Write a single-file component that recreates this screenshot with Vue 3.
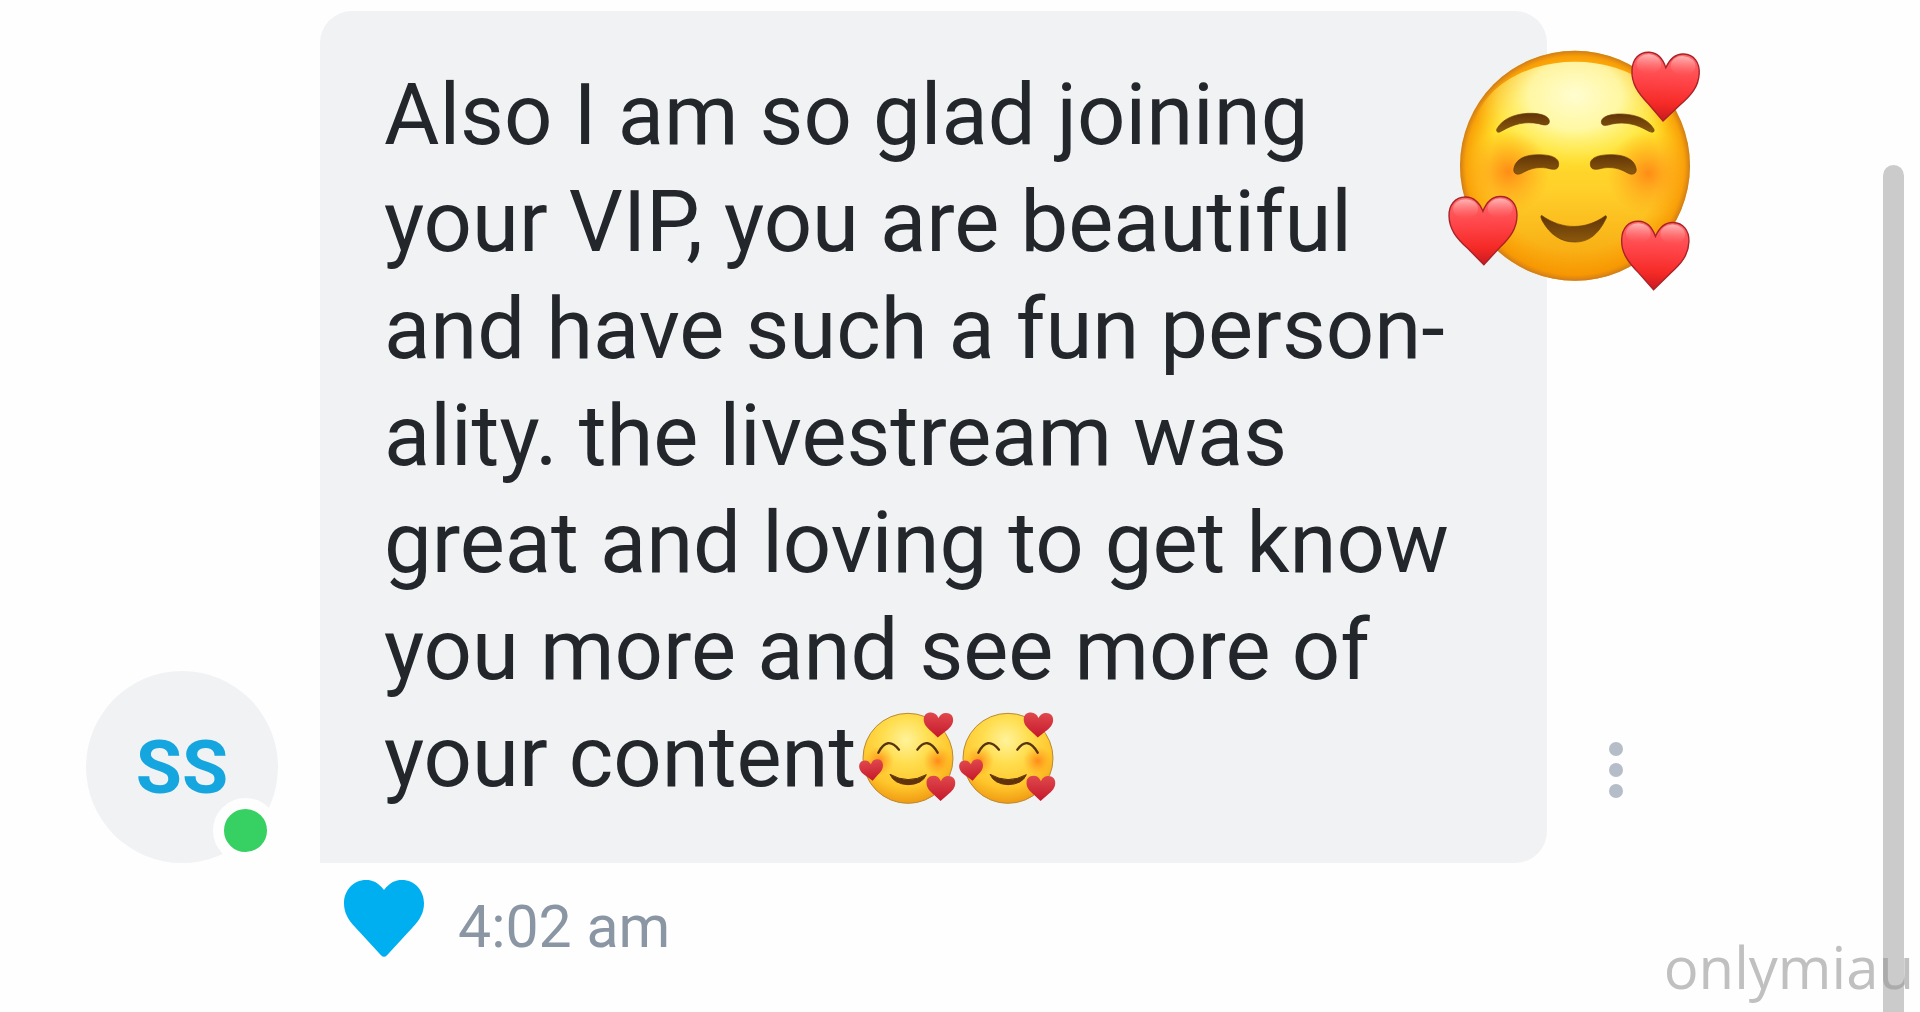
<template>
  <main class="chat">
    <div class="message">
      <div class="avatar">
        <span>SS</span>
        <i class="online"></i>
      </div>
      <div class="bubble">
        <p class="text">
          Also I am so glad joining your VIP, you are beautiful and have such a fun person&shy;ality. the livestream was
          great and loving to get know you more and see more of your content<svg
            v-for="n in 2"
            :key="n"
            class="emoji"
            viewBox="52 55 300 288"
            role="img"
            aria-label="Smiling face with hearts"
          >
            <circle cx="208" cy="200" r="135" fill="url(#smallFace)" stroke="#b98a35" stroke-width="3" />
            <circle cx="122" cy="208" r="44" fill="url(#blush)" />
            <circle cx="297" cy="208" r="44" fill="url(#blush)" />
            <g fill="none" stroke="#573410" stroke-width="7" stroke-linecap="round">
              <path d="M119 183 Q146 131 181 174" />
              <path d="M236 174 Q267 131 297 183" />
            </g>
            <path d="M154 248 Q208 279 263 249 Q251 278 208 279 Q166 277 154 248Z" fill="#60330d" stroke="#60330d" stroke-width="3" stroke-linejoin="round" />
            <g fill="url(#smallHeart)">
              <path :d="heart" transform="translate(255 61) rotate(2) scale(.9 .76)" />
              <path :d="heart" transform="translate(59 208) rotate(-6) scale(.73 .64)" />
              <path :d="heart" transform="translate(263 251) rotate(1) scale(.88 .77)" />
            </g>
          </svg>
        </p>
        <svg class="sticker" viewBox="81 54 768 735" role="img" aria-label="Smiling face with hearts">
          <defs>
            <linearGradient id="face" x1="0" y1="0" x2="0" y2="1">
              <stop offset="0" stop-color="#ffc21a" />
              <stop offset=".35" stop-color="#ffe02a" />
              <stop offset=".6" stop-color="#ffd02a" />
              <stop offset="1" stop-color="#f5a00b" />
            </linearGradient>
            <radialGradient id="edge">
              <stop offset=".74" stop-color="#ff9d00" stop-opacity="0" />
              <stop offset=".95" stop-color="#f79400" stop-opacity=".8" />
              <stop offset="1" stop-color="#cf7c1c" />
            </radialGradient>
            <radialGradient id="shine" cx=".5" cy=".22" r=".5">
              <stop offset="0" stop-color="#fffdd0" />
              <stop offset=".45" stop-color="#fffbb0" stop-opacity=".9" />
              <stop offset=".75" stop-color="#fff470" stop-opacity=".5" />
              <stop offset="1" stop-color="#ffe62b" stop-opacity="0" />
            </radialGradient>
            <radialGradient id="blush">
              <stop offset="0" stop-color="#ff7a12" stop-opacity=".8" />
              <stop offset="1" stop-color="#ff9812" stop-opacity="0" />
            </radialGradient>
            <linearGradient id="brown" x1="0" y1="0" x2="0" y2="1">
              <stop offset="0" stop-color="#613408" />
              <stop offset="1" stop-color="#8b590c" />
            </linearGradient>
            <linearGradient id="bigHeart" x1="0" y1="0" x2="0" y2="1">
              <stop offset="0" stop-color="#ff6a6c" />
              <stop offset=".4" stop-color="#ff4549" />
              <stop offset=".75" stop-color="#f52a26" />
              <stop offset="1" stop-color="#c81a20" />
            </linearGradient>
            <linearGradient id="gloss" x1="0" y1="0" x2="0" y2="1">
              <stop offset="0" stop-color="#ffc9c9" stop-opacity=".8" />
              <stop offset="1" stop-color="#ff7779" stop-opacity="0" />
            </linearGradient>
            <radialGradient id="smallFace" cx=".48" cy=".3" r=".72">
              <stop offset="0" stop-color="#fff39a" />
              <stop offset=".35" stop-color="#ffde50" />
              <stop offset=".72" stop-color="#ffc62b" />
              <stop offset="1" stop-color="#ee9510" />
            </radialGradient>
            <linearGradient id="smallHeart" x1="0" y1="0" x2="0" y2="1">
              <stop offset="0" stop-color="#e0484c" />
              <stop offset="1" stop-color="#c5182c" />
            </linearGradient>
          </defs>
          <circle cx="465" cy="407" r="345" fill="url(#face)" />
          <circle cx="465" cy="407" r="345" fill="url(#edge)" />
          <ellipse cx="465" cy="325" rx="310" ry="230" fill="url(#shine)" />
          <circle cx="265" cy="425" r="125" fill="url(#blush)" />
          <circle cx="685" cy="430" r="125" fill="url(#blush)" />
          <g fill="url(#brown)" stroke="#6b3d0a" stroke-width="2">
            <path d="M231 296 C250 262 295 248 340 250 C374 252 389 263 388 275 C387 288 373 286 356 281 C315 273 282 282 245 303 C234 310 227 306 231 296Z" />
            <path d="M701 296 C682 264 638 250 592 252 C558 254 543 265 544 277 C545 290 559 287 576 282 C617 274 650 283 685 303 C698 310 706 306 701 296Z" />
            <path d="M282 414 C288 386 317 374 356 374 C399 374 416 386 416 401 C416 423 399 419 380 414 C352 410 331 415 306 429 C291 437 278 431 282 414Z" />
            <path d="M648 414 C642 386 612 374 573 374 C529 374 511 386 511 401 C511 423 530 419 549 414 C577 410 598 415 623 429 C638 437 652 431 648 414Z" />
            <path d="M366 557 C428 601 498 599 555 558 C560 555 561 562 557 568 C533 616 503 637 463 636 C423 636 390 614 367 573 C362 563 361 555 366 557Z" />
          </g>
          <g v-for="h in stickerHearts" :key="h" :transform="h">
            <path :d="heart" fill="url(#bigHeart)" stroke="#a92228" stroke-width="2" />
            <ellipse cx="25" cy="18" rx="18" ry="14" fill="url(#gloss)" />
            <ellipse cx="75" cy="18" rx="18" ry="14" fill="url(#gloss)" />
          </g>
        </svg>
      </div>
      <button class="menu" type="button" aria-label="Message options">
        <i></i><i></i><i></i>
      </button>
      <div class="meta">
        <button class="like" type="button" aria-label="Like">
          <svg viewBox="0 0 240 231">
            <path d="M120 30 C138 7 154 0 174 0 C212 0 240 31 240 70 C240 98 228 119 207 141 L129 226 Q120 235 111 226 L33 141 C12 119 0 98 0 70 C0 31 28 0 66 0 C86 0 102 7 120 30Z" fill="#00aff0" />
          </svg>
        </button>
        <time>4:02 am</time>
      </div>
    </div>
    <div class="scrollbar"></div>
    <div class="watermark">onlymiau</div>
  </main>
</template>

<script setup>
// heart outline in a 100 x 100 box
const heart =
  'M50 22 C44 7 36 1 25 1 C10 1 1 12 1 28 C1 47 11 60 27 75 L50 99 L73 75 C89 60 99 47 99 28 C99 12 90 1 75 1 C64 1 56 7 50 22Z'

const stickerHearts = [
  'translate(637 62) rotate(3) scale(2.06 2.08)',
  'translate(84 500) rotate(-1) scale(2.08 2.08)',
  'translate(605 570) rotate(2) scale(2.06 2.08)',
]
</script>

<style>
body {
  background: #fefefe;
}
</style>

<style scoped>
.chat {
  box-sizing: border-box;
  min-height: 100vh;
  padding: 11px 235px 0 86px;
  font-family: Roboto, "Liberation Sans", sans-serif;
  overflow: hidden;
}
.message {
  display: grid;
  grid-template-columns: 192px 1fr 138px;
  align-items: end;
}
.avatar {
  position: relative;
  display: flex;
  align-items: center;
  justify-content: center;
  height: 192px;
  border-radius: 50%;
  background: #f0f2f4;
  color: #15a5df;
  font-size: 75px;
  font-weight: 700;
}
.online {
  position: absolute;
  right: 0;
  bottom: 0;
  width: 43px;
  height: 43px;
  border: 11px solid #fefefe;
  border-radius: 50%;
  background: #36d162;
}
.bubble {
  position: relative;
  margin-left: 42px;
  padding: 51px 76px 52px 64px;
  border-radius: 32px 32px 32px 0;
  background: #f0f2f4;
}
.text {
  margin: 0;
  color: #23262b;
  font-size: 85px;
  line-height: 107px;
  hyphenate-character: "-";
}
.emoji {
  width: 100px;
  height: 96px;
  vertical-align: -20px;
}
.sticker {
  position: absolute;
  top: 37px;
  right: -156px;
  width: 256px;
  height: 245px;
}
.menu {
  display: flex;
  flex-direction: column;
  align-items: center;
  justify-content: center;
  gap: 7px;
  height: 186px;
  padding: 0;
  border: 0;
  background: none;
}
.menu i {
  width: 14px;
  height: 14px;
  border-radius: 50%;
  background: #b5bdc8;
}
.meta {
  grid-column: 2;
  display: flex;
  align-items: flex-start;
  gap: 34px;
  padding: 17px 0 0 66px;
  color: #8a96a3;
  font-size: 59px;
  line-height: 94px;
}
.like {
  padding: 0;
  border: 0;
  background: none;
}
.like svg {
  display: block;
  width: 80px;
  height: 77px;
}
.scrollbar {
  position: fixed;
  top: 165px;
  right: 16px;
  bottom: 0;
  width: 21px;
  border-radius: 11px 11px 0 0;
  background: #cbcbcb;
}
.watermark {
  position: fixed;
  right: 6px;
  bottom: 5px;
  color: rgba(150, 150, 150, 0.6);
  font-family: "Open Sans", sans-serif;
  font-size: 58px;
  line-height: 80px;
}
</style>
